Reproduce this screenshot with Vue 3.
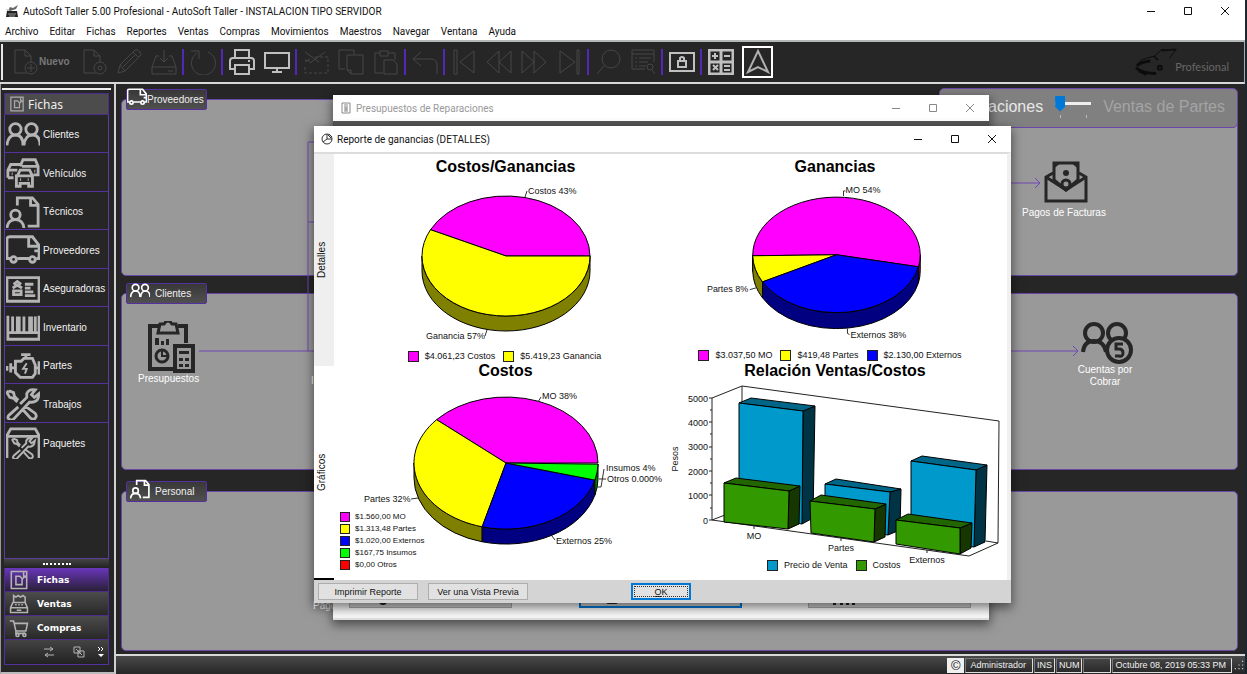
<template>
  <div class="app">
    <header class="title-bar">
      <svg class="app-icon" viewBox="0 0 14 14">
        <path d="M1 5l2 2 2-4 3 1 5-3-2 4-6 2z" fill="#666" />
        <path d="M2 7h10l1 6H1z" fill="#222" />
        <path d="M3 10h8M4 12h6" stroke="#999" />
      </svg>
      <span class="title-text">AutoSoft Taller 5.00 Profesional - AutoSoft Taller - INSTALACION TIPO SERVIDOR</span>
      <div class="win-controls">
        <button v-for="c in controls" :key="c.label" :aria-label="c.label">
          <svg viewBox="0 0 10 10"><path :d="c.d" /></svg>
        </button>
      </div>
    </header>

    <nav class="menu">
      <a v-for="item in menu" :key="item" href="#">{{ item }}</a>
    </nav>

    <div class="toolbar">
      <template v-for="(tool, i) in tools" :key="i">
        <span v-if="tool === '|'" class="sep"></span>
        <button v-else :class="['tool', tool.state]" :aria-label="tool.icon">
          <svg viewBox="0 0 26 26" v-html="icons[tool.icon]"></svg>
          <span v-if="tool.text">{{ tool.text }}</span>
        </button>
      </template>
      <div class="brand">
        <svg viewBox="0 0 46 30">
          <path d="M3 20 Q2 14 12 11 L20 9 L28 2 L43 2 L36 11" fill="none" stroke="#0c0c0c" stroke-width="1" />
          <path d="M2 19 Q6 15 16 14 M1 21 Q8 27 22 27 M4 24 L12 28" fill="none" stroke="#0c0c0c" stroke-width="3" />
          <path d="M20 9 L24 13 M28 3 L43 2" fill="none" stroke="#111" stroke-width="2" />
          <circle cx="26" cy="21" r="2" fill="none" stroke="#0c0c0c" stroke-width="2" />
        </svg>
        <span>Profesional</span>
      </div>
    </div>

    <div class="body">
      <aside class="sidebar">
        <div class="side-inner">
          <h2 class="side-head">
            <svg viewBox="0 0 26 26" v-html="icons.book"></svg>
            Fichas
          </h2>
          <div class="side-list">
            <button v-for="s in sideItems" :key="s.text">
              <svg viewBox="0 0 36 32" v-html="icons[s.icon]"></svg>
              <span>{{ s.text }}</span>
            </button>
          </div>
          <div class="grip"></div>
          <button v-for="(g, i) in groups" :key="g.text" :class="['group', { active: i === 0 }]">
            <svg viewBox="0 0 26 26" v-html="icons[g.icon]"></svg>
            <span>{{ g.text }}</span>
          </button>
          <div class="side-tools">
            <svg viewBox="0 0 12 12"><path d="M1 3h9M7 1l3 2-3 2M11 9H2M5 7L2 9l3 2" /></svg>
            <svg viewBox="0 0 12 12"><path d="M1 1h6v6H1zM5 5h6v6H5zM3 3l6 6" /></svg>
            <svg viewBox="0 0 12 12" class="more"><path d="M3 1l2 2-2 2M6 1l2 2-2 2" /><path d="M3 8h6l-3 3z" fill="#fff" stroke="none" /></svg>
          </div>
        </div>
      </aside>

      <div class="main">
        <main class="workspace">
          <section class="panel">
            <div class="tag">
              <svg viewBox="0 0 36 32" v-html="icons.truck"></svg>
              <span>Proveedores</span>
            </div>
          </section>
          <section class="panel">
            <div class="tag wide">
              <svg viewBox="0 0 36 32" v-html="icons.people"></svg>
              <span>Clientes</span>
            </div>
          </section>
          <section class="panel last">
            <div class="tag wide">
              <svg viewBox="0 0 36 32" v-html="icons.tech"></svg>
              <span>Personal</span>
            </div>
          </section>

          <div class="mode-bar">
            <label for="mode">Reparaciones</label>
            <div class="slider">
              <input id="mode" v-model="mode" type="range" min="0" max="1" />
              <i></i><i></i>
            </div>
            <span>Ventas de Partes</span>
          </div>

          <svg class="flow" width="1120" height="560">
            <path d="M200 58h-8v209M192 138h8M83 267h120M890 99h34M919 94l5 5-5 5M890 267h72M957 262l5 5-5 5" />
          </svg>

          <a href="#" class="node budgets">
            <svg viewBox="0 0 48 52">
              <path d="M12 5H2v43h26M30 5h8v17" fill="none" stroke="#262626" stroke-width="4" />
              <path d="M12 3h4q4-6 8 0h4l2 9H10z" fill="none" stroke="#262626" stroke-width="3" />
              <path d="M7 17h4v7H7zM13 20h3v4h-3zM18 18h3v6h-3z" fill="#262626" />
              <circle cx="14" cy="35" r="6" fill="none" stroke="#262626" stroke-width="3" />
              <path d="M14 30v5h5" fill="none" stroke="#262626" stroke-width="2" />
              <path d="M27 25h18v25H27z" fill="#999" stroke="#262626" stroke-width="4" />
              <path d="M31 30h10v3H31zM31 37h4v3h-4zM37 37h4v3h-4zM31 43h4v3h-4zM37 43h4v3h-4z" fill="#262626" />
            </svg>
            Presupuestos
          </a>
          <a href="#" class="node payments">
            <svg viewBox="0 0 44 42">
              <path d="M10 2h24v17L22 29 10 19z" fill="#999" stroke="#262626" stroke-width="3" />
              <path d="M9 12L2 16v24h40V16l-7-4" fill="none" stroke="#262626" stroke-width="3" />
              <path d="M2 16l20 13 20-13" fill="none" stroke="#262626" stroke-width="3" />
              <path d="M10 2h6l-6 5zM34 2h-6l6 5z" fill="#262626" stroke="#262626" />
              <circle cx="22" cy="12" r="3" fill="#262626" />
              <circle cx="22" cy="23" r="4" fill="none" stroke="#262626" stroke-width="3" />
            </svg>
            Pagos de Facturas
          </a>
          <a href="#" class="node accounts">
            <svg viewBox="0 0 52 42">
              <g fill="none" stroke="#262626" stroke-width="4">
                <circle cx="13" cy="11" r="9" />
                <circle cx="36" cy="11" r="9" />
                <path d="M2 30q1-11 11-11t12 11" />
                <circle cx="38" cy="28" r="12" fill="#999" />
                <path d="M42 22h-7v5h3q4 0 4 4t-4 3h-4" stroke-width="3" />
              </g>
            </svg>
            Cuentas por Cobrar
          </a>
          <a href="#" class="node invoices">Ingresos</a>
          <a href="#" class="node payroll">Pagos</a>

          <section class="window back">
            <header>
              <svg class="win-icon" viewBox="0 0 12 12"><path d="M2 1h8v10H2zM4 3h4M4 5h4M4 7h4M4 9h4M6 5v4" /></svg>
              <span>Presupuestos de Reparaciones</span>
              <div class="win-controls">
                <button v-for="c in controls" :key="c.label" :aria-label="c.label">
                  <svg viewBox="0 0 10 10"><path :d="c.d" /></svg>
                </button>
              </div>
            </header>
            <div class="back-body">
              <button aria-label="Dinero"><i class="dot"></i></button>
              <button aria-label="Reporte" class="focus"><i class="dot wide"></i></button>
              <button aria-label="Opciones"><i class="dots"></i></button>
            </div>
          </section>

          <section class="window front">
            <header>
              <svg class="win-icon" viewBox="0 0 12 12"><circle cx="6" cy="6" r="5" /><path d="M6 1v5h5M6 6L2 9M7 2l3 3M8 1l3 3" /></svg>
              <span>Reporte de ganancias (DETALLES)</span>
              <div class="win-controls">
                <button v-for="c in controls" :key="c.label" :aria-label="c.label">
                  <svg viewBox="0 0 10 10"><path :d="c.d" /></svg>
                </button>
              </div>
            </header>
            <div class="report">
              <div class="tabs">
                <button>Detalles</button>
                <button class="current">Gráficos</button>
              </div>
              <div class="charts">
                <figure v-for="p in pies" :key="p.title" :class="p.kind">
                  <h3>{{ p.title }}</h3>
                  <svg :viewBox="`0 0 337 ${p.height}`">
                    <g stroke="#000" stroke-width="1" stroke-linejoin="round">
                      <path v-for="s in p.slices" :key="'d' + s.from" :d="side(p, s)" :fill="s.dark" />
                      <path v-for="s in p.slices" :key="'t' + s.from" :d="top(p, s)" :fill="s.color" />
                    </g>
                    <g v-for="l in p.labels" :key="l.text">
                      <path :d="l.line" fill="none" stroke="#333" />
                      <text :x="l.x" :y="l.y">{{ l.text }}</text>
                    </g>
                  </svg>
                  <ul>
                    <li v-for="l in p.legend" :key="l[1]"><i :style="{ background: l[0] }"></i>{{ l[1] }}</li>
                  </ul>
                </figure>

                <figure class="bars">
                  <h3>Relación Ventas/Costos</h3>
                  <svg viewBox="0 0 336 199">
                    <g fill="none" stroke="#222">
                      <path d="M41 140V18L71 6L328 41L327 163L298 176L41 140L54 135M71 6v20M315 161l12 2" />
                      <path v-for="n in 11" :key="n" :d="`M${n % 2 ? 38 : 39} ${Math.round(152 - n * 12.2)}H41`" />
                      <path d="M83 146v3M170 158v3M256 170v3" />
                    </g>
                    <g stroke="#000" stroke-width="1" stroke-linejoin="round">
                      <template v-for="(b, i) in bars" :key="i">
                        <polygon :points="b.side" :fill="b.c[2]" />
                        <polygon :points="b.top" :fill="b.c[1]" />
                        <polygon :points="b.face" :fill="b.c[0]" />
                      </template>
                    </g>
                    <text v-for="n in 6" :key="'y' + n" x="37" :y="Math.round(167 - n * 24.4) + 1" text-anchor="end">{{ (n - 1) * 1000 }}</text>
                    <g text-anchor="middle">
                      <text x="83" y="159">MO</text>
                      <text x="170" y="171">Partes</text>
                      <text x="256" y="183">Externos</text>
                      <text x="0" y="0" transform="translate(7 79) rotate(-90)">Pesos</text>
                    </g>
                  </svg>
                  <ul>
                    <li><i :style="{ background: '#0099cc' }"></i>Precio de Venta</li>
                    <li><i :style="{ background: '#339900' }"></i>Costos</li>
                  </ul>
                </figure>
              </div>
            </div>
            <footer>
              <button>Imprimir Reporte</button>
              <button>Ver una Vista Previa</button>
              <button class="ok"><u>O</u>K</button>
            </footer>
          </section>
        </main>

        <footer class="status">
          <span class="copy">©</span>
          <span class="user">Administrador</span>
          <span>INS</span>
          <span>NUM</span>
          <span class="empty"></span>
          <span class="date">Octubre 08, 2019 05:33 PM</span>
          <svg viewBox="0 0 10 10"><path d="M8 2v0M8 5v0M8 8v0M5 5v0M5 8v0M2 8v0" /></svg>
        </footer>
      </div>
    </div>
  </div>
</template>

<script setup>
import { ref } from 'vue';

const mode = ref(0);

const menu = ['Archivo', 'Editar', 'Fichas', 'Reportes', 'Ventas', 'Compras', 'Movimientos', 'Maestros', 'Navegar', 'Ventana', 'Ayuda'];

const controls = [
  { label: 'Minimizar', d: 'M1 5.5h8' },
  { label: 'Maximizar', d: 'M1.5 1.5h7v7h-7z' },
  { label: 'Cerrar', d: 'M1 1l8 8M9 1l-8 8' }
];

const off = (icon, text) => ({ icon, text, state: 'off' });
const on = (icon) => ({ icon, state: 'on' });

const tools = [
  off('new', 'Nuevo'), off('new2'), off('pencil'), off('save'), '|',
  off('refresh'), '|',
  on('print'), on('monitor'), '|',
  off('cut'), off('copy'), off('paste'), '|',
  off('undo'), '|',
  off('first'), off('rewind'), off('forward'), off('last'), '|',
  off('search'), off('list'), '|',
  on('lock'), '|',
  on('calc'), { icon: 'navigate', state: 'framed' }
];

const sideItems = [
  { icon: 'people', text: 'Clientes' },
  { icon: 'cars', text: 'Vehículos' },
  { icon: 'tech', text: 'Técnicos' },
  { icon: 'truck', text: 'Proveedores' },
  { icon: 'card', text: 'Aseguradoras' },
  { icon: 'shelf', text: 'Inventario' },
  { icon: 'engine', text: 'Partes' },
  { icon: 'wrench', text: 'Trabajos' },
  { icon: 'box', text: 'Paquetes' }
];

const groups = [
  { icon: 'book', text: 'Fichas' },
  { icon: 'register', text: 'Ventas' },
  { icon: 'cart', text: 'Compras' }
];

const wrench = '<path d="M3 2l5 2 1 4 4 4M3 2L1 4l3 5 4 1 4 4M20 18l11 8q2 3 0 5t-5 0l-9-10M13 19L3 28q-2 2 0 4t5 0l17-18q7 1 9-4l1-5-5 4-3-3 4-5q-7-1-9 4v4l-7 7"/>';

const icons = {
  new: '<path d="M15 24H3V1h10l6 6v6M13 1v6h6"/><circle cx="19" cy="19" r="6"/><path d="M19 15v8M15 19h8"/>',
  new2: '<path d="M15 24H3V1h10l6 6v6M13 1v6h6"/><circle cx="19" cy="19" r="6"/><circle cx="19" cy="19" r="2"/>',
  pencil: '<path d="M2 24l2-8L19 1q3-1 5 2t0 4L9 22zM4 16l5 6M17 3l6 6M7 18L20 5"/>',
  save: '<path d="M8 7H5L1 18v7h24v-7L21 7h-3M1 18h24M13 1v12M9 9l4 4 4-4M17 22h5"/>',
  refresh: '<path d="M7 4a12 12 0 1 0 11-1M1 2h8v8"/>',
  print: '<path d="M6 8V1h14v7M6 20H1v-8q0-3 3-3h18q3 0 3 3v8h-5M6 16h14v9H6zM19 12h2"/>',
  monitor: '<path d="M1 4h24v15H1zM13 19v4M8 23h10"/>',
  cut: '<path d="M12 8h13v16H2V16" stroke-dasharray="3 2"/><path d="M2 3l14 10M22 3L7 14M2 11q4 0 6 3M2 13l5-3"/>',
  copy: '<path d="M7 20H1V1h15v4M9 6h16v19H13l-4-4zM13 25v-4H9"/>',
  paste: '<path d="M10 24H2V4h5M15 4h7v7M7 2h8v5H7zM11 11h9l4 4v10H11z"/>',
  undo: '<path d="M9 3L1 10l8 7M1 10h18q6 0 6 6v9"/>',
  first: '<path d="M3 1v24h3V1zM23 2v22L9 13z"/>',
  rewind: '<path d="M13 2v22L1 13zM25 2v22L13 13z"/>',
  forward: '<path d="M1 2v22l12-11zM13 2v22l12-11z"/>',
  last: '<path d="M4 2v22l15-11zM21 1v24h2V1z"/>',
  search: '<circle cx="16" cy="10" r="9"/><path d="M9 17l-7 8"/>',
  list: '<path d="M15 20H2V1h22v12M2 5h22M5 9h2M9 9h12M5 13h2M9 13h9M5 17h2M9 17h7"/><circle cx="20" cy="18" r="3"/><path d="M22 21l3 4"/>',
  lock: '<path d="M1 4h24v18H1zM9 12h8v6H9zM11 12V9q2-2 4 0v3"/>',
  calc: '<path d="M1 1h24v24H1zM13 1v24M1 13h24" stroke-width="3"/><path d="M4 7h6M7 4v6M16 7h6M5 16l5 5M10 16l-5 5M16 17h6M16 21h6"/>',
  navigate: '<path d="M13 2l10 21-10-5-10 5z"/>',
  book: '<path d="M3 2h20v22H3zM9 8h5l3 3v8H9zM19 2v8l2-2 2 2"/>',
  register: '<path d="M6 11V2l3 2 3-2 3 2 3-2 3 2v8M5 11h16l3 7v6H2v-6zM2 18h22M8 14h2M12 14h2M16 14h2M10 21h6"/>',
  cart: '<path d="M1 4h5l3 13h13l2-10H7M9 17v3h12"/><circle cx="11" cy="22" r="2"/><circle cx="20" cy="22" r="2"/>',
  people: '<circle cx="10" cy="10" r="6"/><circle cx="27" cy="10" r="6"/><path d="M1 27q1-11 9-11t8 11M19 27q1-11 9-11t8 11"/>',
  cars: '<path d="M15 9l3-7h13l3 7v9h-5M17 9h17M2 21V13l3-6h11M3 13h9M2 21h6M30 14h1M6 17h1"/><path d="M12 19l3-6h10l3 6v11h-4v-3H15v3h-4V19zM12 19h16M15 23h1M23 23h1"/>',
  tech: '<path d="M12 9V1h16l6 7v23H23"/><path d="M26 1v8h8" /><circle cx="10" cy="19" r="5"/><path d="M1 33q1-9 9-9t9 9"/>',
  truck: '<path d="M5 25H1V5q0-3 3-3h24l7 9v14h-3M24 2v10h10M12 25h13M30 17h5"/><circle cx="8" cy="26" r="3"/><circle cx="28" cy="26" r="3"/>',
  card: '<path d="M1 4h34v25H1zM20 11h9M20 15h6M20 19h9M20 23h11M8 11l4-3 4 3M7 15l5-3 5 3M8 18h8v4H8z"/>',
  shelf: '<path d="M2 4v25h33V4M2 22h33M7 5v16M12 5v16M14 5v16M19 5v16M25 5v16M27 5v16M31 5v16"/>',
  engine: '<path d="M16 4h10M21 4v4M10 11h6l3-3h9l3 7v9l-3 4H15l-5-5V11zM5 13v10M5 18h5M1 16v5M31 18h3M35 11v14"/><path d="M22 13l-4 6h4l-2 5" stroke-width="2"/>',
  wrench,
  box: '<path d="M1 32V8l4-7h26l4 7v24M1 9h34"/><g transform="translate(6 10) scale(.7)">' + wrench + '</g>'
};

const M = { color: '#ff00ff', dark: '#800080' };
const Y = { color: '#ffff00', dark: '#808000' };
const B = { color: '#0000ff', dark: '#000080' };
const G = { color: '#00ff00', dark: '#008000' };

const pies = [
  {
    title: 'Costos/Ganancias', kind: 'row', height: 172,
    cx: 172, cy: 80, rx: 84, ry: 60, depth: 15,
    slices: [{ ...M, from: 0, to: 154 }, { ...Y, from: 154, to: 360 }],
    labels: [
      { text: 'Costos 43%', x: 194, y: 18, line: 'M191 21l2-6' },
      { text: 'Ganancia 57%', x: 92, y: 163, line: 'M153 154l-2 6' }
    ],
    legend: [[M.color, '$4.061,23 Costos'], [Y.color, '$5.419,23 Ganancia']]
  },
  {
    title: 'Ganancias', kind: 'row', height: 172,
    cx: 166, cy: 79, rx: 84, ry: 58, depth: 16,
    slices: [{ ...M, from: -12, to: 181 }, { ...Y, from: 181, to: 208 }, { ...B, from: 208, to: 348 }],
    labels: [
      { text: 'MO 54%', x: 175, y: 17, line: 'M173 20v-5h2' },
      { text: 'Partes 8%', x: 36, y: 116, line: 'M79 114l7-2' },
      { text: 'Externos 38%', x: 180, y: 162, line: 'M177 153v5l2 1' }
    ],
    legend: [[M.color, '$3.037,50 MO'], [Y.color, '$419,48 Partes'], [B.color, '$2.130,00 Externos']]
  },
  {
    title: 'Costos', kind: 'column', height: 199,
    cx: 172, cy: 83, rx: 92, ry: 66, depth: 15,
    slices: [{ ...M, from: 0, to: 139 }, { ...Y, from: 139, to: 255 }, { ...B, from: 255, to: 345 }, { ...G, from: 345, to: 359 }],
    labels: [
      { text: 'MO 38%', x: 208, y: 19, line: 'M204 22l3-5' },
      { text: 'Insumos 4%', x: 272, y: 91, line: 'M270 89l-3 18h-4' },
      { text: 'Otros 0.000%', x: 273, y: 102, line: 'M265 99h7' },
      { text: 'Externos 25%', x: 222, y: 164, line: 'M218 156l3 4' },
      { text: 'Partes 32%', x: 30, y: 122, line: 'M77 119l7-1' }
    ],
    legend: [[M.color, '$1.560,00 MO'], [Y.color, '$1.313,48 Partes'], [B.color, '$1.020,00 Externos'], [G.color, '$167,75 Insumos'], ['#ff0000', '$0,00 Otros']]
  }
];

const point = (p, deg, dy = 0) => {
  const a = (deg * Math.PI) / 180;
  return `${(p.cx + p.rx * Math.cos(a)).toFixed(1)} ${(p.cy - p.ry * Math.sin(a) + dy).toFixed(1)}`;
};

const top = (p, s) => {
  const large = s.to - s.from > 180 ? 1 : 0;
  return `M${p.cx} ${p.cy}L${point(p, s.from)}A${p.rx} ${p.ry} 0 ${large} 0 ${point(p, s.to)}Z`;
};

// only the lower half of the rim can be seen
const rim = (p, from, to) =>
  `M${point(p, from)}A${p.rx} ${p.ry} 0 0 0 ${point(p, to)}L${point(p, to, p.depth)}A${p.rx} ${p.ry} 0 0 1 ${point(p, from, p.depth)}Z`;

const side = (p, s) => {
  let d = '';
  if (s.from < 0) d += rim(p, s.from, 0);
  if (s.to > 180) d += rim(p, Math.max(180, s.from), s.to);
  return d;
};

const blue = ['#0099cc', '#006688', '#003344'];
const green = ['#339900', '#226600', '#163800'];

// corners: front-left, front-right, bottom-right, bottom-left, back-left, back-right, back-bottom
const bar = (c, [a, b, d, e, f, g, h]) => ({
  c,
  face: [a, b, d, e].join(' '),
  top: [a, f, g, b].join(' '),
  side: [b, g, h, d].join(' ')
});

const bars = [
  bar(blue, ['68,23', '132,31', '131,144', '68,135', '80,18', '144,26', '142,138']),
  bar(blue, ['154,104', '219,112', '217,155', '154,147', '165,99', '230,109', '229,150']),
  bar(blue, ['240,81', '305,90', '303,167', '240,158', '251,76', '316,85', '314,162']),
  bar(green, ['53,103', '118,111', '117,149', '53,142', '65,98', '129,106', '128,144']),
  bar(green, ['139,121', '204,129', '203,162', '140,153', '150,115', '215,124', '214,157']),
  bar(green, ['225,140', '289,148', '289,174', '225,164', '237,134', '301,143', '300,168'])
];
</script>

<style>
body {
  background: #1c2630;
}
</style>

<style scoped>
.app {
  height: 100vh;
  margin-right: 2px;
  display: flex;
  flex-direction: column;
  overflow: hidden;
  background: #262626;
  font-family: "Liberation Sans", Arial, sans-serif;
  font-size: 10px;
}

button {
  font-family: inherit;
  padding: 0;
  border: 0;
  background: none;
}

a {
  text-decoration: none;
}

svg {
  display: block;
  flex-shrink: 0;
}

h2,
h3,
figure,
ul {
  margin: 0;
  padding: 0;
}

.title-bar {
  height: 22px;
  flex-shrink: 0;
  display: flex;
  align-items: center;
  background: #fff;
  padding: 0 2px 0 5px;
  color: #111;
  font-family: Roboto, "Noto Sans", sans-serif;
}

.app-icon {
  width: 14px;
  height: 14px;
  margin-right: 4px;
}

.win-controls {
  display: flex;
  margin-left: auto;
}

.win-controls button {
  width: 37px;
  height: 20px;
  display: flex;
  align-items: center;
  justify-content: center;
}

.win-controls svg {
  width: 10px;
  height: 10px;
  fill: none;
  stroke: #111;
}

.menu {
  height: 18px;
  flex-shrink: 0;
  display: flex;
  align-items: center;
  gap: 11px;
  padding-left: 5px;
  background: #fff;
  font-family: Roboto, "Noto Sans", sans-serif;
}

.menu a {
  color: #111;
}

.toolbar {
  height: 39px;
  flex-shrink: 0;
  display: flex;
  align-items: center;
  padding: 0 0 1px 5px;
  border-top: 2px solid #b4b8b8;
  border-bottom: 2px solid #d8d8d8;
  border-right: 1px solid #aaa;
  background: #262626;
}

.toolbar::before {
  content: "";
  width: 2px;
  height: 36px;
  margin: 0 5px 0 -4px;
  background: #e8e8e8;
}

.tool {
  min-width: 35px;
  height: 32px;
  display: flex;
  align-items: center;
  justify-content: center;
  color: #777;
  font-size: 10px;
  font-weight: bold;
}

.tool:first-of-type {
  width: 68px;
  justify-content: flex-start;
  padding-left: 4px;
  gap: 1px;
}

.tool svg {
  width: 26px;
  height: 26px;
  fill: none;
  stroke: #464646;
  stroke-width: 1;
}

.tool.on svg {
  stroke: #c0c0c0;
  stroke-width: 2;
}

.tool.framed {
  min-width: 31px;
  margin-left: 4px;
  border: 2px solid #fff;
}

.tool.framed svg {
  stroke: #b0b0b0;
  stroke-width: 2;
}

.sep {
  width: 2px;
  height: 26px;
  margin: 0 1px;
  background: #5327b8;
}

.brand {
  display: flex;
  align-items: center;
  margin-left: auto;
  padding-right: 15px;
  color: #666;
  font-size: 11px;
  font-family: Lato, sans-serif;
}

.brand svg {
  width: 44px;
  height: 30px;
  margin-right: -4px;
}

.brand span {
  margin-top: 10px;
}

.body {
  flex: 1;
  min-height: 0;
  display: flex;
}

.sidebar {
  width: 116px;
  box-sizing: border-box;
  flex-shrink: 0;
  padding: 4px 5px 7px 3px;
  border-left: 1px solid #999;
  border-right: 2px solid #d0d0d0;
  border-bottom: 2px solid #bbb;
}

.side-inner {
  height: 100%;
  display: flex;
  flex-direction: column;
}

.side-inner::before {
  content: "";
  height: 2px;
  flex-shrink: 0;
  margin: 0 -2px 3px;
  background: #eee;
}

.side-head {
  height: 22px;
  flex-shrink: 0;
  display: flex;
  align-items: center;
  gap: 3px;
  padding-left: 4px;
  border: 1px solid #4b2b8c;
  box-sizing: border-box;
  background: #4c4c4c;
  color: #eee;
  font-family: "Noto Sans", sans-serif;
  font-size: 12px;
  font-weight: normal;
}

.side-head svg {
  width: 16px;
  height: 16px;
  fill: none;
  stroke: #aaa;
  stroke-width: 2;
}

.side-list {
  flex: 1;
  min-height: 0;
  border: 1px solid #5c3d99;
  border-top: 0;
}

.side-list button {
  width: 100%;
  height: 39px;
  display: flex;
  align-items: center;
  gap: 3px;
  padding: 2px 0 0 1px;
  box-sizing: border-box;
  border-bottom: 1px solid #5430a0;
  color: #f2f2f2;
  font-size: 10px;
}

.side-list button:nth-child(odd) {
  height: 38px;
}

.side-list button:last-child {
  border-bottom: 0;
}

.side-list svg {
  width: 34px;
  height: 32px;
  fill: none;
  stroke: #b4b4b4;
  stroke-width: 3;
}

.grip {
  height: 9px;
  flex-shrink: 0;
  display: flex;
  align-items: center;
  justify-content: center;
  background: linear-gradient(#444, #222);
}

.grip::after {
  content: "";
  width: 28px;
  border-top: 2px dotted #fff;
}

.group {
  height: 24px;
  flex-shrink: 0;
  display: flex;
  align-items: center;
  gap: 8px;
  padding-left: 4px;
  box-sizing: border-box;
  border: 1px solid #4b2b8c;
  border-top: 0;
  background: linear-gradient(#4c4c4c, #282828);
  color: #fff;
  font-family: "DejaVu Sans", sans-serif;
  font-size: 9px;
  font-weight: bold;
}

.group.active {
  background: linear-gradient(#6936bb, #2a2038);
}

.group svg {
  width: 20px;
  height: 20px;
  fill: none;
  stroke: #b4b4b4;
  stroke-width: 2;
}

.side-tools {
  height: 25px;
  flex-shrink: 0;
  display: flex;
  align-items: center;
  justify-content: flex-end;
  gap: 18px;
  padding-right: 1px;
  border: 1px solid #5430a0;
  border-top: 0;
  box-sizing: border-box;
  background: linear-gradient(#444, #222);
}

.side-tools svg {
  width: 12px;
  height: 12px;
  fill: none;
  stroke: #b4b4b4;
}

.side-tools .more {
  margin-left: -8px;
  stroke: #fff;
}

.main {
  flex: 1;
  min-width: 0;
  display: flex;
  flex-direction: column;
}

.workspace {
  flex: 1;
  min-height: 0;
  position: relative;
  display: flex;
  flex-direction: column;
  gap: 17px;
  padding: 15px 7px 3px 5px;
  overflow: hidden;
}

.panel {
  flex: 177;
  position: relative;
  box-sizing: border-box;
  border: 1px solid #6a46a8;
  border-radius: 5px;
  background: #999;
}

.panel.last {
  flex: 160;
  margin-top: 4px;
}

.tag {
  position: absolute;
  left: 4px;
  top: -11px;
  width: 81px;
  height: 21px;
  box-sizing: border-box;
  display: flex;
  align-items: center;
  border: 1px solid #5430a0;
  border-radius: 2px;
  background: linear-gradient(#383838, #505050);
  color: #f2f2f2;
  font-size: 10px;
}

.tag.wide {
  gap: 5px;
  padding-left: 3px;
}

.tag svg {
  width: 20px;
  height: 20px;
  align-self: flex-start;
  margin-top: -3px;
  fill: none;
  stroke: #fff;
  stroke-width: 3;
}

.mode-bar {
  position: absolute;
  right: 7px;
  top: 4px;
  width: 299px;
  height: 40px;
  box-sizing: border-box;
  display: flex;
  align-items: center;
  justify-content: flex-end;
  gap: 12px;
  padding: 0 12px 3px 0;
  border: 1px solid #6a46a8;
  border-radius: 5px;
  background: #808080;
  color: #e8e8e8;
  font-size: 16px;
}

.mode-bar span {
  color: #a4a4a4;
}

.slider {
  width: 36px;
  height: 24px;
  display: grid;
  grid-template-columns: 1fr 1fr;
}

.slider input {
  grid-column: 1 / 3;
  width: 100%;
  height: 18px;
  margin: 0;
  appearance: none;
  background: linear-gradient(#eee, #eee) center 7px / 100% 3px no-repeat;
}

.slider input::-webkit-slider-thumb {
  appearance: none;
  width: 10px;
  height: 16px;
  background: #0078d7;
  clip-path: polygon(0 0, 100% 0, 100% 70%, 50% 100%, 0 70%);
}

.slider i {
  width: 1px;
  height: 3px;
  margin: 2px 0 0 5px;
  background: #bbb;
}

.slider i:last-child {
  margin-left: 13px;
}

.flow {
  position: absolute;
  left: 0;
  top: 0;
  fill: none;
  stroke: #7047b4;
}

.node {
  position: absolute;
  display: flex;
  flex-direction: column;
  align-items: center;
  color: #fff;
  font-size: 10px;
  line-height: 12px;
  text-align: center;
}

.budgets {
  left: 22px;
  top: 237px;
}

.budgets svg {
  width: 48px;
  height: 52px;
  margin-left: 6px;
}

.payments {
  left: 906px;
  top: 77px;
}

.payments svg {
  width: 44px;
  height: 42px;
  margin: 0 0 4px 4px;
}

.accounts {
  left: 958px;
  top: 238px;
  width: 62px;
}

.accounts svg {
  width: 52px;
  height: 42px;
  margin-left: 4px;
}

.invoices {
  left: 195px;
  top: 291px;
}

.payroll {
  left: 197px;
  top: 516px;
}

.window {
  position: absolute;
  display: flex;
  flex-direction: column;
  background: #fff;
  box-shadow: 0 4px 10px 1px rgba(0, 0, 0, 0.5);
}

.window > header {
  height: 26px;
  flex-shrink: 0;
  display: flex;
  align-items: center;
  gap: 4px;
  padding: 0 1px 0 7px;
  background: #fff;
  font-family: Roboto, "Noto Sans", sans-serif;
  font-size: 10px;
  color: #111;
}

.win-icon {
  width: 12px;
  height: 12px;
  fill: none;
  stroke: #333;
}

.window.back {
  left: 217px;
  top: 11px;
  width: 656px;
  height: 525px;
}

.back > header {
  color: #999;
}

.back > header svg {
  stroke: #888;
}

.back-body {
  flex: 1;
  display: flex;
  align-items: flex-end;
  justify-content: space-between;
  padding: 0 18px 10px 16px;
  border-top: 6px solid #555;
  border-bottom: 2px solid #ddd;
  background: #f8f8f8;
}

.back-body button {
  width: 163px;
  height: 27px;
  display: flex;
  align-items: flex-end;
  justify-content: center;
  border: 1px solid #aaa;
  background: #d0d0d0;
}

.back-body .focus {
  border: 2px solid #0078d7;
}

.dot {
  width: 8px;
  height: 4px;
  margin: 0 96px 2px 0;
  border-radius: 0 0 4px 4px;
  background: #222;
}

.dot.wide {
  width: 14px;
}

.dots {
  width: 22px;
  margin: 0 92px 2px 0;
  border-top: 3px dotted #222;
}

.window.front {
  left: 198px;
  top: 42px;
  width: 697px;
  height: 477px;
}

.report {
  flex: 1;
  min-height: 0;
  display: flex;
  border-top: 2px solid #dcdcdc;
  border-right: 4px solid #f0f0f0;
}

.tabs {
  width: 20px;
  display: flex;
  flex-direction: column;
  border-bottom: 2px solid #000;
}

.tabs button {
  flex: 1;
  display: flex;
  align-items: center;
  justify-content: center;
  padding-left: 6px;
  writing-mode: vertical-rl;
  transform: rotate(180deg);
  background: #efefef;
  color: #111;
  font-size: 10px;
}

.tabs .current {
  background: #fff;
}

.charts {
  flex: 1;
  display: grid;
  grid-template-columns: 337fr 336fr;
  grid-template-rows: 208px 1fr;
}

figure {
  position: relative;
  min-width: 0;
  display: flex;
  flex-direction: column;
}

figure.row {
  padding-top: 4px;
}

h3 {
  padding-left: 6px;
  font-size: 16px;
  line-height: 18px;
  text-align: center;
  color: #000;
}

figure:nth-child(even) h3,
figure.bars h3 {
  padding: 0 8px 0 0;
}

figure svg {
  width: 100%;
}

figure text {
  font-size: 9px;
  fill: #111;
}

figure ul {
  display: flex;
  justify-content: center;
  gap: 8px;
  margin-top: 2px;
  padding-left: 4px;
  list-style: none;
  color: #111;
  font-size: 9px;
  line-height: 12px;
}

figure:nth-child(2) ul {
  padding: 0 18px 0 0;
}

figure li {
  display: flex;
  align-items: center;
  gap: 6px;
}

figure li i {
  width: 11px;
  height: 11px;
  box-sizing: border-box;
  border: 1px solid #222;
}

figure.column ul {
  position: absolute;
  left: 6px;
  bottom: 9px;
  flex-direction: column;
  gap: 0;
  padding: 0;
  font-size: 8px;
}

figure.column li {
  gap: 5px;
}

figure.column li i {
  width: 10px;
  height: 10px;
}

figure.bars ul {
  position: absolute;
  left: 92px;
  bottom: 9px;
}

.front > footer {
  height: 23px;
  flex-shrink: 0;
  display: flex;
  align-items: center;
  gap: 10px;
  padding-left: 4px;
  background: #d4d4d4;
}

.front > footer button {
  width: 100px;
  height: 17px;
  border: 1px solid #adadad;
  background: #e1e1e1;
  color: #111;
  font-size: 9px;
}

.front > footer .ok {
  width: 60px;
  margin-left: 93px;
  border: 2px solid #0078d7;
  outline: 1px dotted #333;
  outline-offset: -4px;
}

.status {
  height: 20px;
  box-sizing: border-box;
  flex-shrink: 0;
  display: flex;
  align-items: center;
  justify-content: flex-end;
  gap: 1px;
  border-top: 2px solid #d8d8d8;
  background: linear-gradient(#4a4a4a, #262626);
  color: #f0f0f0;
  font-size: 9px;
}

.status span {
  height: 15px;
  box-sizing: border-box;
  padding: 0 2px;
  border: 1px solid #777;
  border-right-color: #ddd;
  border-bottom-color: #ddd;
  line-height: 13px;
}

.status .copy {
  width: 17px;
  padding: 0;
  border: 0;
  background: #f0f0f0;
  color: #111;
  font-size: 13px;
  line-height: 15px;
  text-align: center;
}

.status .user {
  padding: 0 6px 0 4px;
}

.status .empty {
  width: 28px;
}

.status .date {
  padding: 0 5px 0 2px;
}

.status svg {
  width: 12px;
  height: 12px;
  stroke: #ccc;
  stroke-width: 1;
  stroke-linecap: square;
}
</style>
